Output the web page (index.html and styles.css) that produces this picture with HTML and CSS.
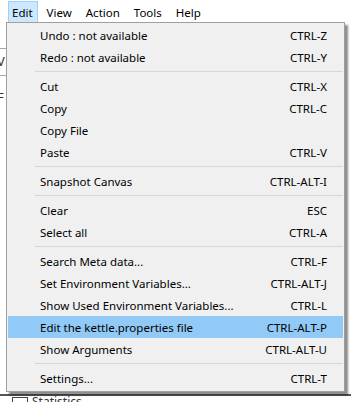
FILE: index.html
```html
<!DOCTYPE html>
<html>
<head>
<meta charset="utf-8">
<link rel="stylesheet" href="styles.css">
</head>
<body>
<div class="app">
  <div class="menubar">
    <span class="mb-item active">Edit</span>
    <span class="mb-item">View</span>
    <span class="mb-item">Action</span>
    <span class="mb-item">Tools</span>
    <span class="mb-item">Help</span>
  </div>
  <div class="backdrop">
    <div class="bg-line l1"></div>
    <div class="bg-frag f1">V</div>
    <div class="bg-line l2"></div>
    <div class="bg-frag f2">F</div>
    <div class="bg-bottom"><span class="bg-icon"></span><span class="bg-text">Statistics</span></div>
  </div>
  <div class="popup">
    <div class="row"><span class="label">Undo : not available</span><span class="key">CTRL-Z</span></div>
    <div class="row"><span class="label">Redo : not available</span><span class="key">CTRL-Y</span></div>
    <div class="sep"></div>
    <div class="row"><span class="label">Cut</span><span class="key">CTRL-X</span></div>
    <div class="row"><span class="label">Copy</span><span class="key">CTRL-C</span></div>
    <div class="row"><span class="label">Copy File</span><span class="key"></span></div>
    <div class="row"><span class="label">Paste</span><span class="key">CTRL-V</span></div>
    <div class="sep"></div>
    <div class="row"><span class="label">Snapshot Canvas</span><span class="key">CTRL-ALT-I</span></div>
    <div class="sep"></div>
    <div class="row"><span class="label">Clear</span><span class="key">ESC</span></div>
    <div class="row"><span class="label">Select all</span><span class="key">CTRL-A</span></div>
    <div class="sep"></div>
    <div class="row"><span class="label">Search Meta data...</span><span class="key">CTRL-F</span></div>
    <div class="row"><span class="label">Set Environment Variables...</span><span class="key">CTRL-ALT-J</span></div>
    <div class="row"><span class="label">Show Used Environment Variables...</span><span class="key">CTRL-L</span></div>
    <div class="row hl"><span class="label">Edit the kettle.properties file</span><span class="key">CTRL-ALT-P</span></div>
    <div class="row"><span class="label">Show Arguments</span><span class="key">CTRL-ALT-U</span></div>
    <div class="sep"></div>
    <div class="row"><span class="label">Settings...</span><span class="key">CTRL-T</span></div>
  </div>
</div>
</body>
</html>
```
FILE: styles.css
```css
html, body {
  margin: 0;
  padding: 0;
  background: #ffffff;
}
.app {
  position: relative;
  width: 351px;
  height: 402px;
  overflow: hidden;
  font-family: "Noto Sans", "Open Sans", sans-serif;
  font-size: 11.5px;
  color: #000;
}
.menubar {
  height: 22px;
  display: flex;
  align-items: stretch;
  padding-left: 8px;
  padding-top: 1px;
  box-sizing: border-box;
  background: #fff;
}
.mb-item {
  display: flex;
  align-items: center;
  padding: 0 4px 0 3px;
  margin-right: 5px;
  border: 1px solid transparent;
  border-bottom: none;
}
.mb-item.active {
  background: #cce8ff;
  border-color: #99d1ff;
}
.backdrop {
  height: 380px;
  position: relative;
}
.bg-line {
  position: absolute;
  left: 0;
  width: 8px;
  height: 1px;
  background: #a8a8a8;
}
.l1 { top: 26px; }
.l2 { top: 53px; }
.bg-frag {
  position: absolute;
  left: -3px;
  font-size: 13px;
  color: #333;
}
.f1 { top: 30px; }
.f2 { top: 66px; }
.bg-bottom {
  position: absolute;
  left: 0;
  right: 0;
  top: 372px;
  height: 8px;
  border-top: 2px solid #555;
  display: flex;
  gap: 4px;
  padding-left: 12px;
  overflow: hidden;
}
.bg-icon {
  width: 14px;
  height: 10px;
  border: 1px solid #444;
  margin-top: 1px;
}
.bg-text {
  font-size: 12px;
  line-height: 12px;
  color: #333;
}
.popup {
  position: absolute;
  left: 6px;
  top: 22px;
  width: 335px;
  padding: 1px 1px 2px;
  background: #f0f0f0;
  border: 1px solid #a0a0a0;
  box-shadow: 3px 3px 2px rgba(0, 0, 0, 0.45);
  display: flex;
  flex-direction: column;
}
.row {
  height: 22px;
  display: flex;
  align-items: center;
  justify-content: space-between;
  padding: 0 16px 0 32px;
}
.row.hl {
  background: #91c9f7;
}
.sep {
  height: 7px;
  display: flex;
  align-items: center;
  margin-left: 27px;
}
.sep::after {
  content: "";
  flex: 1;
  height: 1px;
  background: #d7d7d7;
}
```
